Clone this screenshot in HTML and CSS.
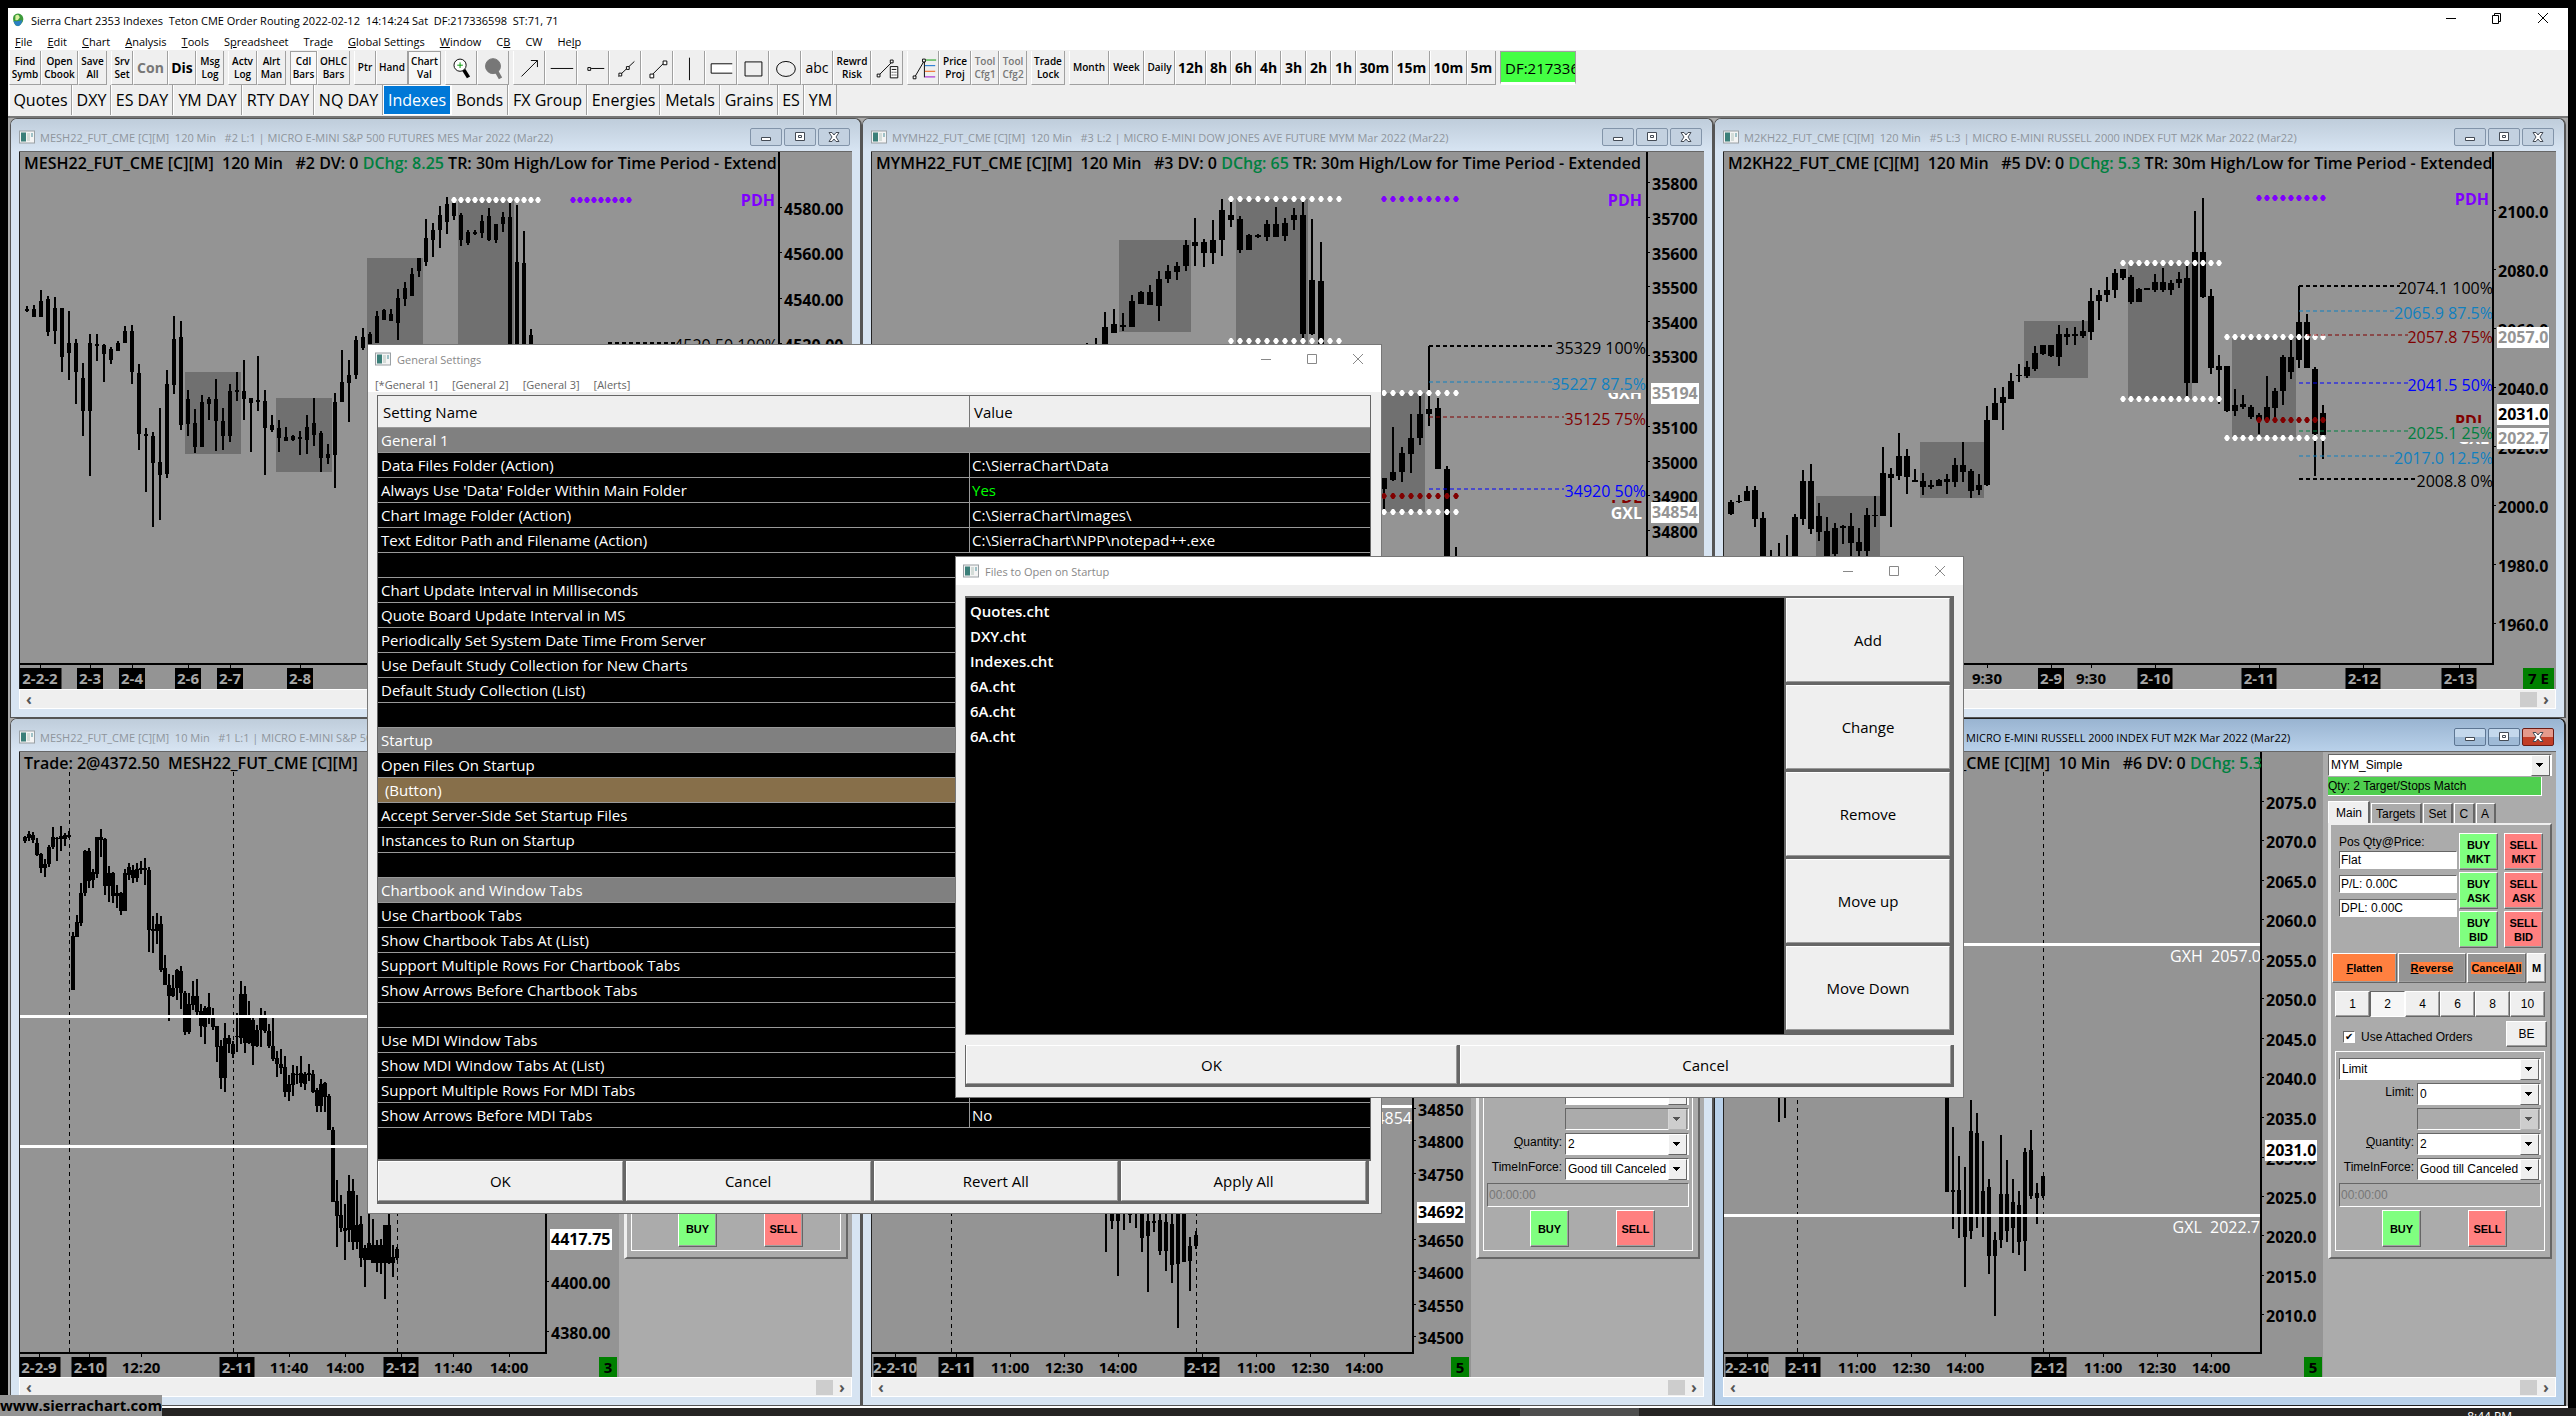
FILE: index.html
```html
<!DOCTYPE html>
<html lang="en">
<head>
<meta charset="utf-8">
<title>Sierra Chart 2353 Indexes</title>
<link rel="stylesheet" href="styles.css">
</head>
<body>
<svg class="defs" aria-hidden="true">
  <symbol id="doc" viewBox="0 0 16 14"><rect x="0.5" y="1" width="15" height="12" fill="#f4f4f4" stroke="#9aa0a4"/><rect x="2" y="2.500" width="5" height="9" fill="#3b7f79"/><path d="M8 3h3v8H8z" fill="#d4dcd8"/><path d="M13 3v4" stroke="#4a8f9a"/></symbol>
</svg>
<main class="app">
  <header class="titlebar">
    <svg class="globe" viewBox="0 0 16 16"><path d="M3 3Q8-2 13 3Q16 9 11 13Q8 16 5 14Q1 9 3 3Z" fill="#3c9a3a"/><path d="M5 3Q9 0 10 5Q8 9 5 8Z" fill="#d9f2a0"/><path d="M3 9Q9 10 13 8Q12 14 8 15Q4 14 3 9Z" fill="#2b7fc4"/></svg>
    <h1>Sierra Chart 2353 Indexes&nbsp; Teton CME Order Routing 2022-02-12&nbsp; 14:14:24 Sat&nbsp; DF:217336598&nbsp; ST:71, 71</h1>
    <div class="winctl winctl--app">
      <button aria-label="Minimize"><svg viewBox="0 0 12 12"><path d="M1 6.500h10"/></svg></button>
      <button aria-label="Restore"><svg viewBox="0 0 12 12"><path d="M1.500 3.500h6v8h-6zM3.500 3.500v-2h6v8h-2"/></svg></button>
      <button aria-label="Close"><svg viewBox="0 0 12 12"><path d="M1 1l10 10M11 1L1 11"/></svg></button>
    </div>
  </header>
  <nav class="menu">
    <a href="#"><u>F</u>ile</a><a href="#"><u>E</u>dit</a><a href="#"><u>C</u>hart</a><a href="#"><u>A</u>nalysis</a><a href="#"><u>T</u>ools</a><a href="#">S<u>p</u>readsheet</a><a href="#">Tra<u>d</u>e</a><a href="#"><u>G</u>lobal Settings</a><a href="#"><u>W</u>indow</a><a href="#">C<u>B</u></a><a href="#">CW</a><a href="#">He<u>l</u>p</a>
  </nav>
  <div class="toolbar">
    <div class="group g-file"><button>Find<br>Symb</button><button>Open<br>Cbook</button><button>Save<br>All</button></div>
    <div class="group g-srv"><button>Srv<br>Set</button><button class="big off">Con</button><button class="big">Dis</button><button>Msg<br>Log</button></div>
    <div class="group g-log"><button>Actv<br>Log</button><button>Alrt<br>Man</button></div>
    <div class="group g-bars"><button class="pressed">Cdl<br>Bars</button><button>OHLC<br>Bars</button></div>
    <div class="group g-ptr"><button>Ptr</button><button>Hand</button><button class="pressed">Chart<br>Val</button></div>
    <div class="group g-icons">
      <button aria-label="Zoom in"><svg viewBox="0 0 32 32"><circle cx="15" cy="13" r="6.500" fill="#fff"/><path d="M15 10v6M12 13h6" stroke="#090"/><path d="M19 18l5 8" stroke-width="4"/></svg></button>
      <button aria-label="Zoom out"><svg viewBox="0 0 32 32"><circle cx="16" cy="14" r="8" fill="#777" stroke="#777"/><path d="M20 20l4 7" stroke="#777" stroke-width="4"/></svg></button>
    </div>
    <div class="group g-draw">
      <button aria-label="Arrow"><svg viewBox="0 0 32 32"><path d="M8 25L25 8M18 8h7v7"/></svg></button>
      <button aria-label="Horizontal line"><svg viewBox="0 0 32 32"><path d="M5 16.500h24"/></svg></button>
      <button aria-label="Ray"><svg viewBox="0 0 32 32"><path d="M10.500 15.500h3v3h-3zM14 16.500h14"/></svg></button>
      <button aria-label="Extended line"><svg viewBox="0 0 32 32"><path d="M9 25L26 9"/><path d="M9.500 21.500h3v3h-3zM17.500 14.500h3v3h-3z" fill="#fff"/></svg></button>
      <button aria-label="Line"><svg viewBox="0 0 32 32"><path d="M11 23L24 10"/><path d="M8.500 22.500h4v4h-4zM22.500 8.500h4v4h-4z" fill="#fff"/></svg></button>
      <button aria-label="Vertical line"><svg viewBox="0 0 32 32"><path d="M16.500 5v24"/></svg></button>
      <button aria-label="Price range"><svg viewBox="0 0 32 32"><path d="M28 11.500H5.500v10H28" fill="#fff"/></svg></button>
      <button aria-label="Rectangle"><svg viewBox="0 0 32 32"><path d="M7.500 9.500h18v15h-18z"/></svg></button>
      <button aria-label="Ellipse"><svg viewBox="0 0 32 32"><ellipse cx="17" cy="17" rx="10" ry="8"/></svg></button>
      <button class="abc">abc</button>
      <button>Rewrd<br>Risk</button>
      <button aria-label="Calculator"><svg viewBox="0 0 32 32"><path d="M7 24L21 10"/><path d="M5.500 22.500h3v3h-3zM19.500 7.500h3v3h-3z" fill="#fff"/><path d="M19.500 14.500h8v12h-8zM21 17.500h5M21 20.500h1m1 0h1m1 0h1M21 23.500h1m1 0h1m1 0h1" fill="#fff"/></svg></button>
    </div>
    <div class="group g-proj">
      <button aria-label="Retracement"><svg viewBox="0 0 32 32"><path d="M7 26L17.500 8v18"/><path d="M5.500 24.500h3v3h-3zM15.500 6.500h3v3h-3z" fill="#fff"/><path d="M19 7.500h11" stroke="#090"/><path d="M18 13.500h11" stroke="#06c"/><path d="M18 19.500h11" stroke="#e50"/><path d="M18 25.500h11" stroke="#90c"/></svg></button>
      <button>Price<br>Proj</button><button class="off">Tool<br>Cfg1</button><button class="off">Tool<br>Cfg2</button>
    </div>
    <div class="group g-lock"><button>Trade<br>Lock</button></div>
    <div class="group g-time"><button>Month</button><button>Week</button><button>Daily</button><button class="big">12h</button><button class="big">8h</button><button class="big">6h</button><button class="big">4h</button><button class="big">3h</button><button class="big">2h</button><button class="big">1h</button><button class="big">30m</button><button class="big">15m</button><button class="big">10m</button><button class="big">5m</button></div>
    <output class="feed">DF:217336598</output>
  </div>
  <nav class="tabs">
    <a href="#">Quotes</a><a href="#">DXY</a><a href="#">ES DAY</a><a href="#">YM DAY</a><a href="#">RTY DAY</a><a href="#">NQ DAY</a><a href="#" class="on">Indexes</a><a href="#">Bonds</a><a href="#">FX Group</a><a href="#">Energies</a><a href="#">Metals</a><a href="#">Grains</a><a href="#">ES</a><a href="#">YM</a>
  </nav>
  <div class="workspace">
    <section class="mdi" data-chart="es120" data-title="MESH22_FUT_CME [C][M]  120 Min   #2 L:1 | MICRO E-MINI S&amp;P 500 FUTURES MES Mar 2022 (Mar22)"></section>
    <section class="mdi" data-chart="ym120" data-title="MYMH22_FUT_CME [C][M]  120 Min   #3 L:2 | MICRO E-MINI DOW JONES AVE FUTURE MYM Mar 2022 (Mar22)"></section>
    <section class="mdi" data-chart="rty120" data-title="M2KH22_FUT_CME [C][M]  120 Min   #5 L:3 | MICRO E-MINI RUSSELL 2000 INDEX FUT M2K Mar 2022 (Mar22)"></section>
    <section class="mdi" data-chart="es10" data-trade="yes" data-title="MESH22_FUT_CME [C][M]  10 Min   #1 L:1 | MICRO E-MINI S&amp;P 500 FUTURES MES Mar 2022 (Mar22)"></section>
    <section class="mdi" data-chart="ym10" data-trade="yes" data-title="MYMH22_FUT_CME [C][M]  10 Min   #4 L:2 | MICRO E-MINI DOW JONES AVE FUTURE MYM Mar 2022 (Mar22)"></section>
    <section class="mdi mdi--active" data-chart="rty10" data-trade="yes" data-title="M2KH22_FUT_CME [C][M]  10 Min   #6 L:3 | MICRO E-MINI RUSSELL 2000 INDEX FUT M2K Mar 2022 (Mar22)"></section>
  </div>
</main>
<footer class="taskbar"><span class="task"></span><span class="clock">8:44 PM</span></footer>

<section class="dialog settings" role="dialog" aria-label="General Settings">
  <header><svg class="doc"><use href="#doc"/></svg><h2>General Settings</h2>
    <div class="winctl"><button aria-label="Minimize"><svg viewBox="0 0 12 12"><path d="M1 6.500h10"/></svg></button><button aria-label="Maximize"><svg viewBox="0 0 12 12"><path d="M1.500 1.500h9v9h-9z"/></svg></button><button aria-label="Close"><svg viewBox="0 0 12 12"><path d="M1 1l10 10M11 1L1 11"/></svg></button></div>
  </header>
  <nav class="pages"><a href="#">[*General 1]</a><a href="#">[General 2]</a><a href="#">[General 3]</a><a href="#">[Alerts]</a></nav>
  <div class="settings__body">
    <div class="sheet">
    <table>
      <thead><tr><th>Setting Name</th><th>Value</th></tr></thead>
      <tbody>
        <tr class="head"><td colspan="2">General 1</td></tr>
        <tr><td>Data Files Folder (Action)</td><td>C:\SierraChart\Data</td></tr>
        <tr><td>Always Use 'Data' Folder Within Main Folder</td><td class="yes">Yes</td></tr>
        <tr><td>Chart Image Folder (Action)</td><td>C:\SierraChart\Images\</td></tr>
        <tr><td>Text Editor Path and Filename (Action)</td><td>C:\SierraChart\NPP\notepad++.exe</td></tr>
        <tr><td colspan="2"></td></tr>
        <tr><td>Chart Update Interval in Milliseconds</td><td></td></tr>
        <tr><td>Quote Board Update Interval in MS</td><td></td></tr>
        <tr><td>Periodically Set System Date Time From Server</td><td></td></tr>
        <tr><td>Use Default Study Collection for New Charts</td><td></td></tr>
        <tr><td>Default Study Collection (List)</td><td></td></tr>
        <tr><td colspan="2"></td></tr>
        <tr class="head"><td colspan="2">Startup</td></tr>
        <tr><td>Open Files On Startup</td><td></td></tr>
        <tr class="picked"><td>&nbsp;(Button)</td><td></td></tr>
        <tr><td>Accept Server-Side Set Startup Files</td><td></td></tr>
        <tr><td>Instances to Run on Startup</td><td></td></tr>
        <tr><td colspan="2"></td></tr>
        <tr class="head"><td colspan="2">Chartbook and Window Tabs</td></tr>
        <tr><td>Use Chartbook Tabs</td><td></td></tr>
        <tr><td>Show Chartbook Tabs At (List)</td><td></td></tr>
        <tr><td>Support Multiple Rows For Chartbook Tabs</td><td></td></tr>
        <tr><td>Show Arrows Before Chartbook Tabs</td><td></td></tr>
        <tr><td colspan="2"></td></tr>
        <tr><td>Use MDI Window Tabs</td><td></td></tr>
        <tr><td>Show MDI Window Tabs At (List)</td><td></td></tr>
        <tr><td>Support Multiple Rows For MDI Tabs</td><td></td></tr>
        <tr><td>Show Arrows Before MDI Tabs</td><td>No</td></tr>
      </tbody>
    </table>
    </div>
    <div class="buttons buttons--4"><button>OK</button><button>Cancel</button><button>Revert All</button><button>Apply All</button></div>
  </div>
</section>

<section class="dialog files" role="dialog" aria-label="Files to Open on Startup">
  <header><svg class="doc"><use href="#doc"/></svg><h2>Files to Open on Startup</h2>
    <div class="winctl"><button aria-label="Minimize"><svg viewBox="0 0 12 12"><path d="M1 6.500h10"/></svg></button><button aria-label="Maximize"><svg viewBox="0 0 12 12"><path d="M1.500 1.500h9v9h-9z"/></svg></button><button aria-label="Close"><svg viewBox="0 0 12 12"><path d="M1 1l10 10M11 1L1 11"/></svg></button></div>
  </header>
  <div class="files__body">
    <div class="files__main">
      <ul><li>Quotes.cht</li><li>DXY.cht</li><li>Indexes.cht</li><li>6A.cht</li><li>6A.cht</li><li>6A.cht</li></ul>
      <div class="side"><button>Add</button><button>Change</button><button>Remove</button><button>Move up</button><button>Move Down</button></div>
    </div>
    <div class="buttons buttons--2"><button>OK</button><button>Cancel</button></div>
  </div>
</section>

<a class="watermark" href="#">www.sierrachart.com</a>

<template id="trade">
  <aside class="trade">
    <span class="combo combo--top"><select aria-label="Trade configuration"><option>MYM_Simple</option></select></span>
    <p class="match">Qty: 2 Target/Stops Match</p>
    <div class="ttabs"><button class="on">Main</button><button>Targets</button><button>Set</button><button>C</button><button>A</button></div>
    <div class="tpage">
      <div class="position">
        <label class="pos">Pos Qty@Price:<input value="Flat"></label>
        <input aria-label="Profit and loss" value="P/L: 0.00C">
        <input aria-label="Daily profit and loss" value="DPL: 0.00C">
        <div class="market"><button class="buy">BUY<br>MKT</button><button class="sell">SELL<br>MKT</button><button class="buy">BUY<br>ASK</button><button class="sell">SELL<br>ASK</button><button class="buy">BUY<br>BID</button><button class="sell">SELL<br>BID</button></div>
      </div>
      <div class="actions"><button class="flat"><span><u>F</u>latten</span></button><button class="dark"><span><u>R</u>everse</span></button><button class="dark"><span>Cancel<u>A</u>ll</span></button><button>M</button></div>
      <div class="sizes"><button>1</button><button class="down">2</button><button>4</button><button>6</button><button>8</button><button>10</button></div>
      <div class="attach"><label><input type="checkbox" checked>Use Attached Orders</label><button>BE</button></div>
      <div class="order">
        <span class="combo wide"><select aria-label="Order type"><option>Limit</option></select></span>
        <label><span>Limit:</span><span class="combo"><select><option>0</option></select></span></label>
        <label><span></span><span class="combo combo--off"><select disabled aria-label="Second price"><option></option></select></span></label>
        <label><span><u>Q</u>uantity:</span><span class="combo"><select><option>2</option></select></span></label>
        <label><span>TimeInForce:</span><span class="combo"><select><option>Good till Canceled</option></select></span></label>
        <input class="gtd" aria-label="Expiry time" disabled value="00:00:00">
        <div class="send"><button class="buy">BUY</button><button class="sell">SELL</button></div>
      </div>
    </div>
  </aside>
</template>
<script src="charts.js"></script>
</body>
</html>
```
FILE: styles.css
```css
* { box-sizing: border-box; }
body {
  margin: 0; min-height: 100vh; display: flex; flex-direction: column;
  padding: 8px 8px 0; background: #000; position: relative; overflow: hidden;
  font-family: "Open Sans", "Noto Sans", sans-serif; font-size: 11px; color: #000;
}
button, input, select { font: inherit; color: inherit; margin: 0; padding: 0; border-radius: 0; }
a { color: inherit; text-decoration: none; }
h1, h2, p, ul { margin: 0; padding: 0; font-weight: 400; font-size: 11px; }
.defs { position: absolute; width: 0; height: 0; }
.app { flex: 1; display: flex; flex-direction: column; background: #fff; border-bottom: 2px solid #fff; min-width: 0; }

.titlebar { height: 24px; display: flex; align-items: center; padding-left: 3px; gap: 6px; }
.titlebar h1 { flex: 1; }
.globe { width: 14px; height: 14px; }
.winctl { display: flex; height: 100%; align-items: center; }
.winctl button { width: 46px; border: 0; background: none; display: grid; place-items: center; color: #888; }
.winctl svg { width: 12px; height: 12px; fill: none; stroke: currentColor; }
.winctl--app { padding: 0 2px 4px 0; }
.winctl--app button { color: #000; }

.menu { height: 18px; display: flex; align-items: center; gap: 15px; padding-left: 7px; }
.toolbar { display: flex; gap: 4px; background: #efefef; padding: 1px 0 0 1px; height: 35px; }
.group { display: grid; height: 34px; }
.group button {
  border: 0; border-right: 1px solid #a0a0a0; border-bottom: 1px solid #a0a0a0; border-left: 1px solid #fff;
  background: #efefef; font-weight: 600; font-size: 10px; line-height: 13px; white-space: nowrap;
  display: flex; align-items: center; justify-content: center; text-align: center; overflow: hidden;
}
.group .big { font-size: 14px; font-weight: 700; }
.group .off { color: #777; }
.group .pressed { background: #f8f8f8; border-top: 1px solid #a0a0a0; border-left-color: #a0a0a0; }
.group .abc { font-size: 14px; font-weight: 400; }
.group svg { width: 32px; height: 32px; fill: none; stroke: #000; }
.g-file { grid-template-columns: 32px 37px 29px; }
.g-srv { grid-template-columns: 22px 35px 28px 28px; }
.g-log { grid-template-columns: 29px 29px; }
.g-bars { grid-template-columns: 27px 33px; }
.g-ptr { grid-template-columns: 22px 32px 33px; }
.g-icons { grid-template-columns: 32px 32px; }
.g-draw { grid-template-columns: repeat(10, 32px) 38px 32px; }
.g-proj { grid-template-columns: 32px 32px 28px 28px; }
.g-lock { grid-template-columns: 34px; }
.g-time { grid-template-columns: 40px 35px 31px 31px repeat(6, 25px) repeat(3, 37px) 29px; }
.feed { width: 76px; height: 34px; background: #4f4; border: 1px solid #a0a0a0; border-bottom: 3px solid #fff; font-size: 15px; line-height: 32px; padding-left: 4px; overflow: hidden; }

.tabs {
  display: grid; background: #efefef; height: 31px; padding-left: 1px;
  grid-template-columns: 63px 39px 62px 69px 72px 69px 68px 57px 79px 73px 60px 58px 26px 33px;
}
.tabs a { font-size: 16px; line-height: 31px; border-right: 1px solid #a0a0a0; border-left: 1px solid #fff; text-align: center; white-space: nowrap; height: 30px; }
.tabs .on { background: #0078d7; color: #fff; border: 1px solid #fff; line-height: 29px; }

.workspace {
  flex: 1; display: grid; grid-template-columns: repeat(3, 1fr); grid-template-rows: 600fr 688fr;
  padding: 0 2px; background: #ababab; border-top: 2px solid #777; min-height: 1290px;
}
.mdi {
  display: flex; flex-direction: column; min-width: 0; min-height: 0; padding: 0 8px 8px;
  background: #d7e4f2; border: 1px solid #555; border-right-width: 2px; border-radius: 7px 7px 0 0;
}
.mdi__title { height: 32px; margin: 0 -8px; padding: 4px 10px 0 8px; display: flex; align-items: center; gap: 5px; color: #8e959c; background: linear-gradient(#bfcddb, #d7e4f2); border-radius: 6px 6px 0 0; }
.mdi__title h2 { flex: 1; white-space: pre; overflow: hidden; }
.doc { width: 16px; height: 14px; flex: none; }
.mdi__ctl { display: flex; gap: 2px; }
.mdi__ctl button { width: 32px; height: 18px; border: 1px solid #8294a9; background: #c3d1e0; border-radius: 2px; display: grid; place-items: center; }
.mdi__ctl svg { width: 12px; height: 10px; fill: #fff; stroke: #444b55; }
.mdi--active { background: #b9d1ea; border-color: #222; }
.mdi--active .mdi__title { background: linear-gradient(#99b4d1, #b9d1ea); color: #000; }
.mdi--active .mdi__ctl button { background: linear-gradient(#c4d8ec 50%, #9fbad6 50%); border-color: #5d7693; }
.mdi--active .mdi__ctl button:last-child { background: linear-gradient(#e59a8c 50%, #c23e27 50%); border-color: #6c1c15; }
.mdi__body { flex: 1; display: flex; min-height: 0; border-top: 1px solid #666; }
.plot { flex: 1; min-width: 0; height: 100%; background: #949494; border-left: 1px solid #222; display: block; }
.hscroll { height: 20px; background: #efefef; border: 1px solid #fff; display: flex; align-items: center; justify-content: space-between; padding: 0 4px; }
.hscroll button { border: 0; background: none; font-size: 16px; line-height: 14px; width: 10px; font-weight: 700; color: #555; }
.hscroll i { width: 17px; height: 15px; background: #cdcdcd; margin: 0 4px 0 auto; }

.plot text { white-space: pre; font-size: 16px; }
.plot .title { font-weight: 600; }
.plot .price { font-weight: 700; }
.plot .tag { font-weight: 700; }
.plot .time { font-weight: 700; font-size: 15px; }
.plot .mid { text-anchor: middle; }
.plot .end { text-anchor: end; }
.plot .wick { stroke: #000; stroke-width: 2; }
.plot .axis { stroke: #000; stroke-width: 2; fill: none; }
.plot .day { stroke: #000; stroke-dasharray: 4 4; }

.trade { width: 233px; flex: none; background: #ababab; padding: 2px 0 0 5px; font: 12px "Liberation Sans", Arial, sans-serif; overflow: hidden; }
.trade button { background: #efefef; border: 1px solid #666; border-top-color: #fff; border-left-color: #fff; box-shadow: inset -1px -1px #a0a0a0; display: grid; place-items: center; text-align: center; }
.trade input { display: block; width: 118px; height: 18px; border: 1px solid #666; border-right-color: #fff; border-bottom-color: #fff; padding: 0 1px; background: #fff; }
.combo { position: relative; display: block; height: 22px; width: 124px; background: #fff; border: 1px solid #666; border-right-color: #fff; border-bottom-color: #fff; }
.combo select { appearance: none; border: 0; background: none; width: 100%; height: 20px; padding-left: 2px; display: block; }
.combo::after { content: ""; position: absolute; right: 1px; top: 0; width: 17px; height: 19px; background: linear-gradient(#000, #000) 4px 7px / 7px 1px, linear-gradient(#000, #000) 5px 8px / 5px 1px, linear-gradient(#000, #000) 6px 9px / 3px 1px, linear-gradient(#000, #000) 7px 10px / 1px 1px, #efefef; background-repeat: no-repeat; border: 1px solid #666; border-top-color: #fff; border-left-color: #fff; pointer-events: none; }
.combo--off { background: #ababab; }
.combo--off::after { opacity: 0.5; }
.combo--top { width: 224px; }
.match { font-size: 12px; width: 214px; height: 19px; line-height: 18px; margin: 1px 0 5px; background: #4fcf4f; border-right: 1px solid #fff; border-bottom: 1px solid #fff; }
.ttabs { display: flex; gap: 1px; align-items: flex-end; height: 22px; width: 224px; }
.ttabs button { height: 20px; padding: 0 5px 0 4px; border-bottom: 0; background: #ababab; border-right: 2px solid #666; box-shadow: none; }
.ttabs .on { height: 22px; background: #efefef; padding: 0 6px 0 7px; }
.tpage { width: 224px; height: 436px; border: 2px solid #666; border-left: 3px solid #efefef; border-top: 2px solid #efefef; }
.position { display: grid; grid-template-columns: 118px 1fr; grid-template-rows: 36px 18px 18px 1fr; gap: 6px 2px; align-items: start; padding: 8px 0 0 8px; height: 128px; }
.pos { line-height: 18px; }
.market { grid-column: 2; grid-row: 1 / 5; display: grid; grid-template-columns: 39px 39px; grid-template-rows: repeat(3, 37px); gap: 2px 6px; line-height: 14px; }
.trade .market button, .trade .send button { font-weight: 700; font-size: 11px; }
.trade .buy { background: #80ff80; }
.trade .sell { background: #ff8080; }
.actions { display: grid; grid-template-columns: 65px 68px 59px 19px; gap: 1px; padding-left: 1px; height: 30px; font-weight: 700; font-size: 11px; }
.trade .flat { background: #ff8040; }
.trade .dark { background: #949494; }
.dark span { background: #ff8040; }
.sizes { display: grid; grid-template-columns: repeat(6, 35px); height: 26px; margin: 8px 0 0 4px; }
.trade .down { background: #f6f6f6; border-color: #666 #fff #fff #666; box-shadow: none; }
.attach { display: flex; justify-content: space-between; margin: 4px 3px 4px 12px; height: 26px; }
.attach label { display: flex; align-items: center; gap: 6px; padding-top: 6px; }
.trade .attach input { width: 12px; height: 12px; margin: 0; appearance: none; display: grid; place-items: center; }
.attach input:checked::before { content: "✔"; font: 10px/10px "DejaVu Sans", sans-serif; }
.attach button { width: 41px; }
.order { width: 210px; height: 200px; margin-left: 4px; border: 1px solid #fff; padding: 6px 3px 0; display: flex; flex-direction: column; gap: 3px; }
.order label { display: grid; grid-template-columns: 75px 124px; gap: 3px; text-align: right; line-height: 18px; }
.order .wide { width: 202px; }
.trade .gtd { width: 202px; height: 24px; background: #ababab; color: #777; }
.send { display: flex; gap: 47px; padding-left: 43px; }
.send button { width: 39px; height: 37px; }

.taskbar { height: 8px; display: flex; align-items: flex-start; background: #262423; margin: 0 -8px; overflow: hidden; }
.task { width: 119px; height: 8px; margin-left: 59%; background: #4e4e4e; }
.clock { margin: 2px 64px 0 auto; color: #fff; font-size: 12px; line-height: 14px; }
.watermark { position: absolute; left: 0; bottom: 0; background: #949494; font-weight: 700; font-size: 15px; line-height: 21px; width: 162px; white-space: nowrap; overflow: hidden; }

.dialog { position: absolute; display: flex; flex-direction: column; background: #efefef; border: 1px solid #777; font-size: 15px; }
.dialog header { height: 28px; background: #fff; display: flex; align-items: center; gap: 6px; padding-left: 7px; color: #888; }
.dialog h2 { flex: 1; }
.settings { left: 367px; top: 344px; width: 1015px; height: 870px; }
.pages { background: #fff; height: 19px; font-size: 11px; line-height: 24px; display: flex; gap: 14px; padding-left: 7px; color: #666; }
.settings__body { flex: 1; padding: 3px 10px 9px 9px; display: flex; flex-direction: column; }
.sheet { flex: 1; background: #000; border: 1px solid #666; border-width: 1px 1px 2px; }
.sheet table { width: 100%; border-spacing: 0; table-layout: fixed; color: #fff; }
.sheet th { height: 32px; background: #efefef; color: #000; font-weight: 400; text-align: left; padding: 0 5px; border-bottom: 1px solid #999; }
.sheet th:first-child { width: 592px; border-right: 1px solid #777; }
.sheet th + th { padding-left: 4px; }
.sheet td { height: 25px; line-height: 24px; padding: 0 3px; border-bottom: 1px solid #999; }
.sheet td + td { padding-left: 2px; }
.sheet td:first-child:not([colspan]) { border-right: 1px solid #999; }
.sheet .head { background: #808080; }
.sheet .picked { background: #876f4a; }
.sheet .yes { color: #0f0; }
.buttons { display: grid; background: #666; gap: 3px; padding: 0 3px 3px 1px; }
.buttons--4 { grid-template-columns: repeat(4, 1fr); height: 43px; margin-right: 2px; }
.buttons--2 { grid-template-columns: repeat(2, 1fr); height: 42px; }
.buttons button, .side button { background: #efefef; border: 1px solid #999; border-top-color: #fff; border-left-color: #fff; }
.files { left: 955px; top: 556px; width: 1009px; height: 542px; }
.files__body { flex: 1; display: flex; flex-direction: column; padding: 11px 9px 10px; gap: 10px; }
.files__main { flex: 1; display: grid; grid-template-columns: 1fr 170px; background: #000; border: 2px solid #666; border-width: 2px 0 1px 1px; }
.files ul { list-style: none; color: #fff; font-weight: 600; font-size: 15px; line-height: 25px; padding: 1px 4px; }
.side { background: #666; padding: 0 4px 4px 2px; display: grid; grid-template-rows: repeat(5, 1fr); gap: 3px; }
```
FILE: charts.js
```js
const BLACK = '#000', WHITE = '#fff', SKY = '#1080c0', MAROON = '#800000', BLUE = '#00f', GREEN = '#008040', VIOLET = '#7f00ff', GREY = '#949494';

// bars: x, high, body top, body bottom, low
const charts = {
  es120: {
    x: 20, y: 152, axisX: 779, axisY: 664, body: 4,
    title: ['MESH22_FUT_CME [C][M]  120 Min   #2 DV: 0 ', 'DChg: 8.25', ' TR: 30m High/Low for Time Period - Extend'],
    zones: [[367,258,56,90],[458,200,56,145],[185,372,56,82],[276,398,56,74]],
    bars: '27 306 309 311 312;34 305 309 317 317;41 290 301 317 317;48 296 299 332 336;55 297 308 331 344;62 308 308 357 372;69 311 343 353 380;76 339 343 372 404;83 363 378 411 436;90 334 343 411 476;97 334 344 346 361;104 344 345 354 382;111 347 349 360 364;118 341 343 351 351;125 326 331 343 343;132 325 331 372 384;139 364 373 434 450;146 428 434 436 492;153 432 436 463 527;160 408 462 475 520;167 370 384 474 478;174 316 339 385 394;181 321 337 425 430;188 390 399 424 436;195 409 423 447 453;202 395 402 447 447;209 397 399 404 420;216 379 399 421 451;223 408 421 436 450;230 384 391 436 442;237 372 390 392 401;244 360 391 399 420;251 398 398 403 452;258 356 400 402 411;265 390 401 428 475;272 415 425 430 432;279 420 428 438 452;286 427 437 441 441;293 435 436 440 441;300 431 437 439 455;307 415 427 440 454;314 398 423 435 446;321 431 433 458 472;328 444 454 458 464;335 393 402 455 488;342 350 382 402 402;349 360 375 383 422;356 336 340 375 379;363 328 337 348 350;370 332 334 345 345;377 311 316 343 343;384 309 310 320 320;391 309 314 321 321;398 289 298 323 340;405 282 288 299 306;412 268 274 296 296;419 258 258 271 277;426 219 238 262 266;433 223 230 240 257;440 206 215 230 248;447 197 204 222 234;454 200 203 216 220;461 213 215 240 246;468 230 232 243 245;475 230 232 234 235;482 215 221 233 238;489 208 216 240 241;496 224 224 240 243;503 212 217 224 232;510 203 217 350 350;517 205 262 350 350;524 231 263 350 350;531 329 335 350 350',
    dots: [[454,538,7,200,WHITE],[573,629,7,200,VIOLET]],
    tags: [['PDH',775,200,VIOLET]],
    fibs: [['4520.50 100%',343,608,678,BLACK,778]],
    prices: [['4580.00',209],['4560.00',254],['4540.00',300],['4520.00',345]],
    times: [['2-2-2',40,1],['2-3',90,1],['2-4',132,1],['2-6',188,1],['2-7',230,1],['2-8',300,1]],
    count: ['7 E',818,31]
  },
  ym120: {
    x: 872, y: 152, axisX: 1647, axisY: 664, body: 6,
    title: ['MYMH22_FUT_CME [C][M]  120 Min   #3 DV: 0 ', 'DChg: 65', ' TR: 30m High/Low for Time Period - Extended'],
    zones: [[1119,240,72,92],[1236,199,72,146],[1353,393,72,119]],
    bars: '1087 343 350 350 350;1096 338 350 350 350;1105 312 327 346 346;1114 309 324 333 333;1123 313 325 327 331;1132 295 301 327 327;1141 291 292 304 304;1150 285 292 305 305;1159 271 279 306 321;1168 265 271 279 283;1177 262 266 272 280;1186 240 245 266 271;1195 218 242 246 266;1204 239 242 253 267;1213 220 240 253 264;1222 199 210 240 256;1231 202 215 220 227;1240 216 219 250 253;1249 234 235 250 250;1258 234 235 237 238;1267 220 224 237 241;1276 207 224 237 237;1285 218 223 236 241;1294 208 215 220 230;1303 202 215 334 338;1312 219 280 334 335;1321 242 281 346 346;1384 478 478 489 510;1393 427 472 480 481;1402 447 453 472 482;1411 414 438 454 473;1420 396 414 438 445;1429 346 409 414 426;1438 398 408 469 469;1447 466 469 560 560;1456 547 560 560 560',
    dots: [[1231,1339,9,199,WHITE],[1231,1339,9,341,WHITE],[1384,1456,9,199,VIOLET],[1384,1456,9,393,WHITE],[1384,1456,9,496,MAROON],[1384,1456,9,512,WHITE]],
    tags: [['PDH',1642,200,VIOLET],['GXH',1642,393,WHITE],['PDL',1642,497,MAROON]],
    fibs: [['35329 100%',346,1429,1554,BLACK,1646],['35227 87.5%',382,1429,1552,SKY,1646],['35125 75%',417,1429,1564,MAROON,1646],['34920 50%',489,1429,1564,BLUE,1646]],
    over: [['GXL',1642,513,WHITE]],
    prices: [['35800',184],['35700',219],['35600',254],['35500',288],['35400',323],['35300',357],['35100',428],['35000',463],['34900',497],['34800',532]],
    boxes: [['35194',393,GREY,48],['34854',512,GREY,48]],
    times: [], count: ['7 E',1670,31]
  },
  rty120: {
    x: 1724, y: 152, axisX: 2493, axisY: 664, body: 6,
    title: ['M2KH22_FUT_CME [C][M]  120 Min   #5 DV: 0 ', 'DChg: 5.3', ' TR: 30m High/Low for Time Period - Extended'],
    zones: [[1816,496,64,64],[1920,442,64,56],[2024,321,64,57],[2128,263,64,136],[2232,337,64,100]],
    bars: '1731 500 502 514 515;1739 495 501 502 503;1747 486 491 501 501;1755 486 490 519 527;1763 512 518 560 560;1771 550 560 560 560;1779 543 560 560 560;1787 535 560 560 560;1795 514 517 560 560;1803 470 481 519 525;1811 464 481 529 534;1819 503 516 532 541;1827 517 531 560 560;1835 523 528 554 560;1843 525 526 528 544;1851 513 526 543 560;1859 528 542 551 560;1867 508 515 551 560;1875 496 515 516 527;1883 447 473 516 516;1891 468 474 478 527;1899 433 456 476 480;1907 449 456 477 494;1915 469 480 482 482;1923 473 481 487 495;1931 480 485 487 489;1939 479 480 486 486;1947 474 479 482 494;1955 458 465 482 487;1963 442 465 472 482;1971 469 471 491 498;1979 474 485 490 495;1987 406 420 485 486;1995 388 403 420 420;2003 387 397 403 430;2011 373 381 399 399;2019 364 375 376 382;2027 361 367 376 378;2035 346 353 369 371;2043 345 345 354 355;2051 345 345 356 357;2059 325 334 357 366;2067 328 334 337 345;2075 327 334 336 345;2083 320 331 336 338;2091 288 301 332 340;2099 290 295 301 320;2107 277 290 295 302;2115 269 273 290 298;2123 269 269 278 280;2131 275 277 302 304;2139 288 289 302 302;2147 288 288 290 290;2155 274 282 290 292;2163 268 282 290 292;2171 280 283 290 295;2179 272 279 283 288;2187 266 278 383 396;2195 211 252 383 383;2203 198 252 297 298;2211 289 296 368 374;2219 355 366 370 404;2227 366 366 411 412;2235 389 405 411 416;2243 395 404 407 409;2251 405 407 417 419;2259 413 415 420 434;2267 376 407 420 421;2275 388 391 408 418;2283 355 357 391 405;2291 340 357 372 379;2299 286 322 360 368;2307 314 322 368 368;2315 367 369 434 476;2323 405 413 435 459',
    dots: [[2123,2219,8,263,WHITE],[2227,2323,8,337,WHITE],[2259,2323,8,198,VIOLET],[2123,2219,8,399,WHITE],[2259,2323,8,420,MAROON],[2227,2323,8,438,WHITE]],
    tags: [['PDH',2489,199,VIOLET],['PDL',2486,421,MAROON],['GXL',2489,438,WHITE]],
    fibs: [['2074.1 100%',286,2299,2400,BLACK,2493],['2065.9 87.5%',311,2299,2396,SKY,2493],['2057.8 75%',335,2307,2408,MAROON,2493],['2041.5 50%',383,2299,2408,BLUE,2493],['2025.1 25%',431,2299,2408,GREEN,2493],['2017.0 12.5%',456,2299,2396,SKY,2493],['2008.8 0%',479,2299,2418,BLACK,2493]],
    prices: [['2100.0',212],['2080.0',271],['2060.0',330],['2040.0',389],['2020.0',448],['2000.0',507],['1980.0',566],['1960.0',625]],
    boxes: [['2057.0',337,GREY,52],['2031.0',414,BLACK,52],['2022.7',438,GREY,52]],
    times: [['9:30',1987],['2-9',2051,1],['9:30',2091],['2-10',2155,1],['2-11',2259,1],['2-12',2363,1],['2-13',2459,1]],
    count: ['7 E',2523,31]
  },
  es10: {
    x: 20, y: 752, axisX: 546, axisY: 1353, body: 4,
    title: ['Trade: 2@4372.50  MESH22_FUT_CME [C][M]  10 Min', '', ''],
    bars: '25 836 837 841 843;29 831 834 838 841;33 832 835 840 843;37 838 843 855 856;41 853 854 868 873;45 859 864 868 877;49 845 847 864 867;53 827 837 847 849;57 837 838 839 861;61 826 836 839 851;65 833 835 839 846;69 831 835 837 838;73 932 936 990 990;77 915 922 937 937;81 883 893 923 926;85 850 851 893 896;89 848 851 881 888;93 869 872 880 888;97 837 837 874 878;101 829 837 840 857;105 838 839 886 895;109 866 873 886 902;113 872 873 896 903;117 885 893 896 908;121 892 893 911 915;125 869 873 911 911;129 863 867 875 880;133 865 870 878 883;137 863 869 878 882;141 861 868 870 874;145 858 868 870 885;149 867 870 930 952;153 916 929 931 953;157 913 924 931 944;161 916 924 970 972;165 955 968 985 985;169 974 985 996 1021;173 975 988 996 997;177 969 970 988 1000;181 966 971 993 1009;185 991 993 1032 1035;189 993 1004 1032 1034;193 981 996 1005 1010;197 979 996 1012 1016;201 1004 1011 1026 1037;205 1006 1008 1027 1044;209 993 1007 1018 1024;213 1008 1017 1027 1030;217 1026 1026 1047 1062;221 1040 1046 1078 1089;225 1023 1038 1078 1092;229 1035 1038 1044 1053;233 1041 1044 1054 1058;237 1013 1036 1037 1052;241 981 994 1038 1044;245 986 994 1043 1053;249 1001 1018 1043 1044;253 1018 1020 1046 1065;257 1025 1030 1046 1047;261 1008 1017 1030 1047;265 1011 1018 1031 1033;269 1024 1031 1046 1048;273 1016 1046 1059 1061;277 1051 1058 1064 1077;281 1049 1064 1068 1074;285 1056 1067 1092 1097;289 1075 1084 1092 1101;293 1065 1073 1085 1096;297 1066 1074 1075 1084;301 1056 1073 1083 1087;305 1072 1074 1084 1090;309 1064 1073 1075 1081;313 1070 1074 1092 1093;317 1088 1090 1106 1112;321 1079 1084 1106 1112;325 1082 1083 1097 1112;329 1094 1096 1130 1130;333 1127 1130 1202 1202;337 1180 1201 1216 1247;341 1195 1215 1228 1232;345 1204 1228 1231 1260;349 1175 1191 1230 1242;353 1179 1191 1242 1250;357 1195 1225 1242 1249;361 1216 1224 1258 1267;365 1245 1248 1260 1287;369 1213 1243 1260 1260;373 1219 1245 1263 1263;377 1240 1245 1263 1272;381 1239 1245 1263 1274;385 1225 1225 1263 1299;389 1213 1225 1263 1264;393 1245 1257 1263 1277;397 1247 1249 1258 1260',
    days: [69,233,397], levels: [1016,1146],
    prices: [['4400.00',1283],['4380.00',1333]],
    boxes: [['4417.75',1239,BLACK,62]],
    times: [['2-2-9',39,1],['2-10',89,1],['12:20',141],['2-11',237,1],['11:40',289],['14:00',345],['2-12',401,1],['11:40',453],['14:00',509]],
    count: ['3',599,18]
  },
  ym10: {
    x: 872, y: 752, axisX: 1413, axisY: 1353, body: 4,
    title: ['MYMH22_FUT_CME [C][M]  10 Min', '', ''],
    bars: '1106 1205 1205 1205 1252;1112 1205 1205 1221 1229;1118 1205 1205 1221 1276;1124 1205 1205 1205 1230;1130 1205 1205 1215 1223;1136 1205 1205 1214 1228;1142 1205 1205 1238 1252;1148 1214 1221 1236 1292;1154 1205 1221 1223 1232;1160 1205 1220 1251 1255;1166 1205 1222 1251 1271;1172 1205 1224 1265 1283;1178 1205 1205 1264 1328;1184 1205 1205 1262 1262;1190 1237 1246 1261 1291;1196 1231 1235 1246 1249',
    days: [951,1196], levels: [1106],
    notes: [['GXL  34854',1412,1118]],
    prices: [['34850',1110],['34800',1142],['34750',1175],['34650',1241],['34600',1273],['34550',1306],['34500',1338]],
    boxes: [['34692',1212,BLACK,48]],
    times: [['2-2-10',895,1],['2-11',956,1],['11:00',1010],['12:30',1064],['14:00',1118],['2-12',1202,1],['11:00',1256],['12:30',1310],['14:00',1364]],
    count: ['5',1451,18]
  },
  rty10: {
    x: 1724, y: 752, axisX: 2261, axisY: 1353, body: 4, titleEnd: 2262,
    title: ['M2KH22_FUT_CME [C][M]  10 Min   #6 DV: 0 ', 'DChg: 5.3', ''],
    bars: '1779 1090 1090 1090 1122;1785 1090 1090 1090 1118;1947 1080 1080 1192 1192;1953 1127 1190 1192 1229;1959 1156 1190 1215 1238;1965 1167 1214 1237 1287;1971 1100 1131 1231 1239;1977 1113 1133 1215 1228;1983 1141 1191 1215 1237;1989 1179 1187 1256 1274;1995 1232 1240 1256 1316;2001 1135 1194 1240 1248;2007 1160 1194 1231 1242;2013 1179 1202 1228 1253;2019 1191 1205 1242 1255;2025 1148 1152 1241 1271;2031 1130 1150 1196 1199;2037 1183 1193 1198 1224;2043 1176 1176 1196 1198',
    days: [1797,2043], levels: [944,1215],
    notes: [['GXH  2057.0',2261,956],['GXL  2022.7',2260,1227]],
    prices: [['2075.0',803],['2070.0',842],['2065.0',882],['2060.0',921],['2055.0',961],['2050.0',1000],['2045.0',1040],['2040.0',1079],['2035.0',1119],['2030.0',1159],['2025.0',1198],['2020.0',1237],['2015.0',1277],['2010.0',1316]],
    boxes: [['2031.0',1150,BLACK,52]],
    times: [['2-2-10',1747,1],['2-11',1803,1],['11:00',1857],['12:30',1911],['14:00',1965],['2-12',2049,1],['11:00',2103],['12:30',2157],['14:00',2211]],
    count: ['5',2304,18]
  }
};

const rect = (x, y, w, h, fill) => `<rect x="${x}" y="${y}" width="${w}" height="${h}" fill="${fill}"/>`;
const text = (cls, x, y, s, fill = BLACK) => `<text class="${cls}" x="${x}" y="${y}" fill="${fill}">${s}</text>`;

function drawChart(c) {
  let s = (c.zones || []).map(z => rect(...z, '#707070')).join('');
  s += (c.days || []).map(x => `<path class="day" d="M${x + .5} 772V${c.axisY}"/>`).join('');
  let wicks = '', bodies = '';
  for (const bar of c.bars.split(';')) {
    const [x, hi, top, bottom, lo] = bar.split(' ').map(Number);
    wicks += `M${x} ${hi}V${lo}`;
    if (bottom > top) bodies += `M${x} ${top}V${bottom}`;
  }
  s += `<path class="wick" d="${wicks}"/><path stroke="#000" stroke-width="${c.body}" d="${bodies}"/>`;
  s += (c.levels || []).map(y => rect(c.x, y - 1, c.axisX - c.x, 3, WHITE)).join('');
  for (const [from, to, step, y, color] of c.dots || []) {
    let d = '';
    for (let x = from; x <= to; x += step) d += `M${x - 3} ${y}l2-3h2l2 3-2 3h-2z`;
    s += `<path d="${d}" fill="${color}"/>`;
  }
  s += (c.tags || []).map(([t, x, y, f]) => text('tag end', x, y + 6, t, f)).join('');
  for (const [t, y, from, to, color, end] of c.fibs || []) {
    const w = color === BLACK ? 2 : 1;
    s += `<path d="M${from} ${y}H${to}" stroke="${color}" stroke-width="${w}" stroke-dasharray="4 3"/>`;
    s += rect(to + 2, y - 8, end - to - 3, 19, GREY) + text('end', end, y + 8, t, color);
  }
  s += (c.over || []).map(([t, x, y, f]) => text('tag end', x, y + 6, t, f)).join('');
  s += (c.notes || []).map(([t, x, y]) => text('end', x, y + 6, t, WHITE)).join('');
  const right = c.axisX + 5;
  s += `<path class="axis" d="M${c.axisX} ${c.y}V${c.axisY}H${c.x}"/>`;
  for (const [t, y] of c.prices) s += rect(c.axisX, y - 2, 3, 1, BLACK) + text('price', right, y + 6, t);
  for (const [t, y, f, w] of c.boxes || []) s += rect(right - 1, y - 10, w, 21, WHITE) + text('price', right, y + 6, t, f);
  for (const [t, x, day] of c.times) {
    s += rect(x, c.axisY, 1, 4, BLACK);
    if (day) { const w = t.length > 4 ? 43 : t.length > 3 ? 35 : 26; s += rect(x - w / 2, c.axisY + 4, w, 21, BLACK); }
    s += text('time mid', x, c.axisY + 20, t, day ? '#a8a8a8' : BLACK);
  }
  const [n, nx, nw] = c.count;
  s += rect(nx, c.axisY + 4, nw, 21, '#008000') + text('time mid', nx + nw / 2, c.axisY + 20, n);
  const [a, b, d] = c.title;
  const spans = `${a}<tspan fill="${GREEN}">${b}</tspan>${d}`;
  s += c.titleEnd ? text('title end', c.titleEnd, c.y + 17, spans)
    : `<svg x="${c.x}" y="${c.y}" width="${c.axisX - c.x}" height="30">${text('title', 4, 17, spans)}</svg>`;
  return `<svg class="plot"><g transform="translate(${-c.x} ${-c.y})">${s}</g></svg>`;
}

for (const win of document.querySelectorAll('.mdi')) {
  const { chart, title, trade } = win.dataset;
  win.innerHTML = `<header class="mdi__title"><svg class="doc"><use href="#doc"/></svg><h2></h2>
    <div class="mdi__ctl"><button aria-label="Minimize"><svg viewBox="0 0 12 10"><path d="M1.500 5.500h9v3h-9z"/></svg></button>
    <button aria-label="Maximize"><svg viewBox="0 0 12 10"><path d="M1.500.500h9v8h-9zM4.500 3.500h3v2h-3z"/></svg></button>
    <button aria-label="Close"><svg viewBox="0 0 12 10"><path d="M1 .500h3l2 2.500 2-2.500h3L8 5l3 4.500H8L6 7 4 9.500H1L4 5z"/></svg></button></div></header>
    <div class="mdi__body">${drawChart(charts[chart])}</div>
    <div class="hscroll"><button aria-label="Scroll left">‹</button><i></i><button aria-label="Scroll right">›</button></div>`;
  win.querySelector('h2').textContent = title;
  if (trade) win.querySelector('.mdi__body').append(document.getElementById('trade').content.cloneNode(true));
}
```
